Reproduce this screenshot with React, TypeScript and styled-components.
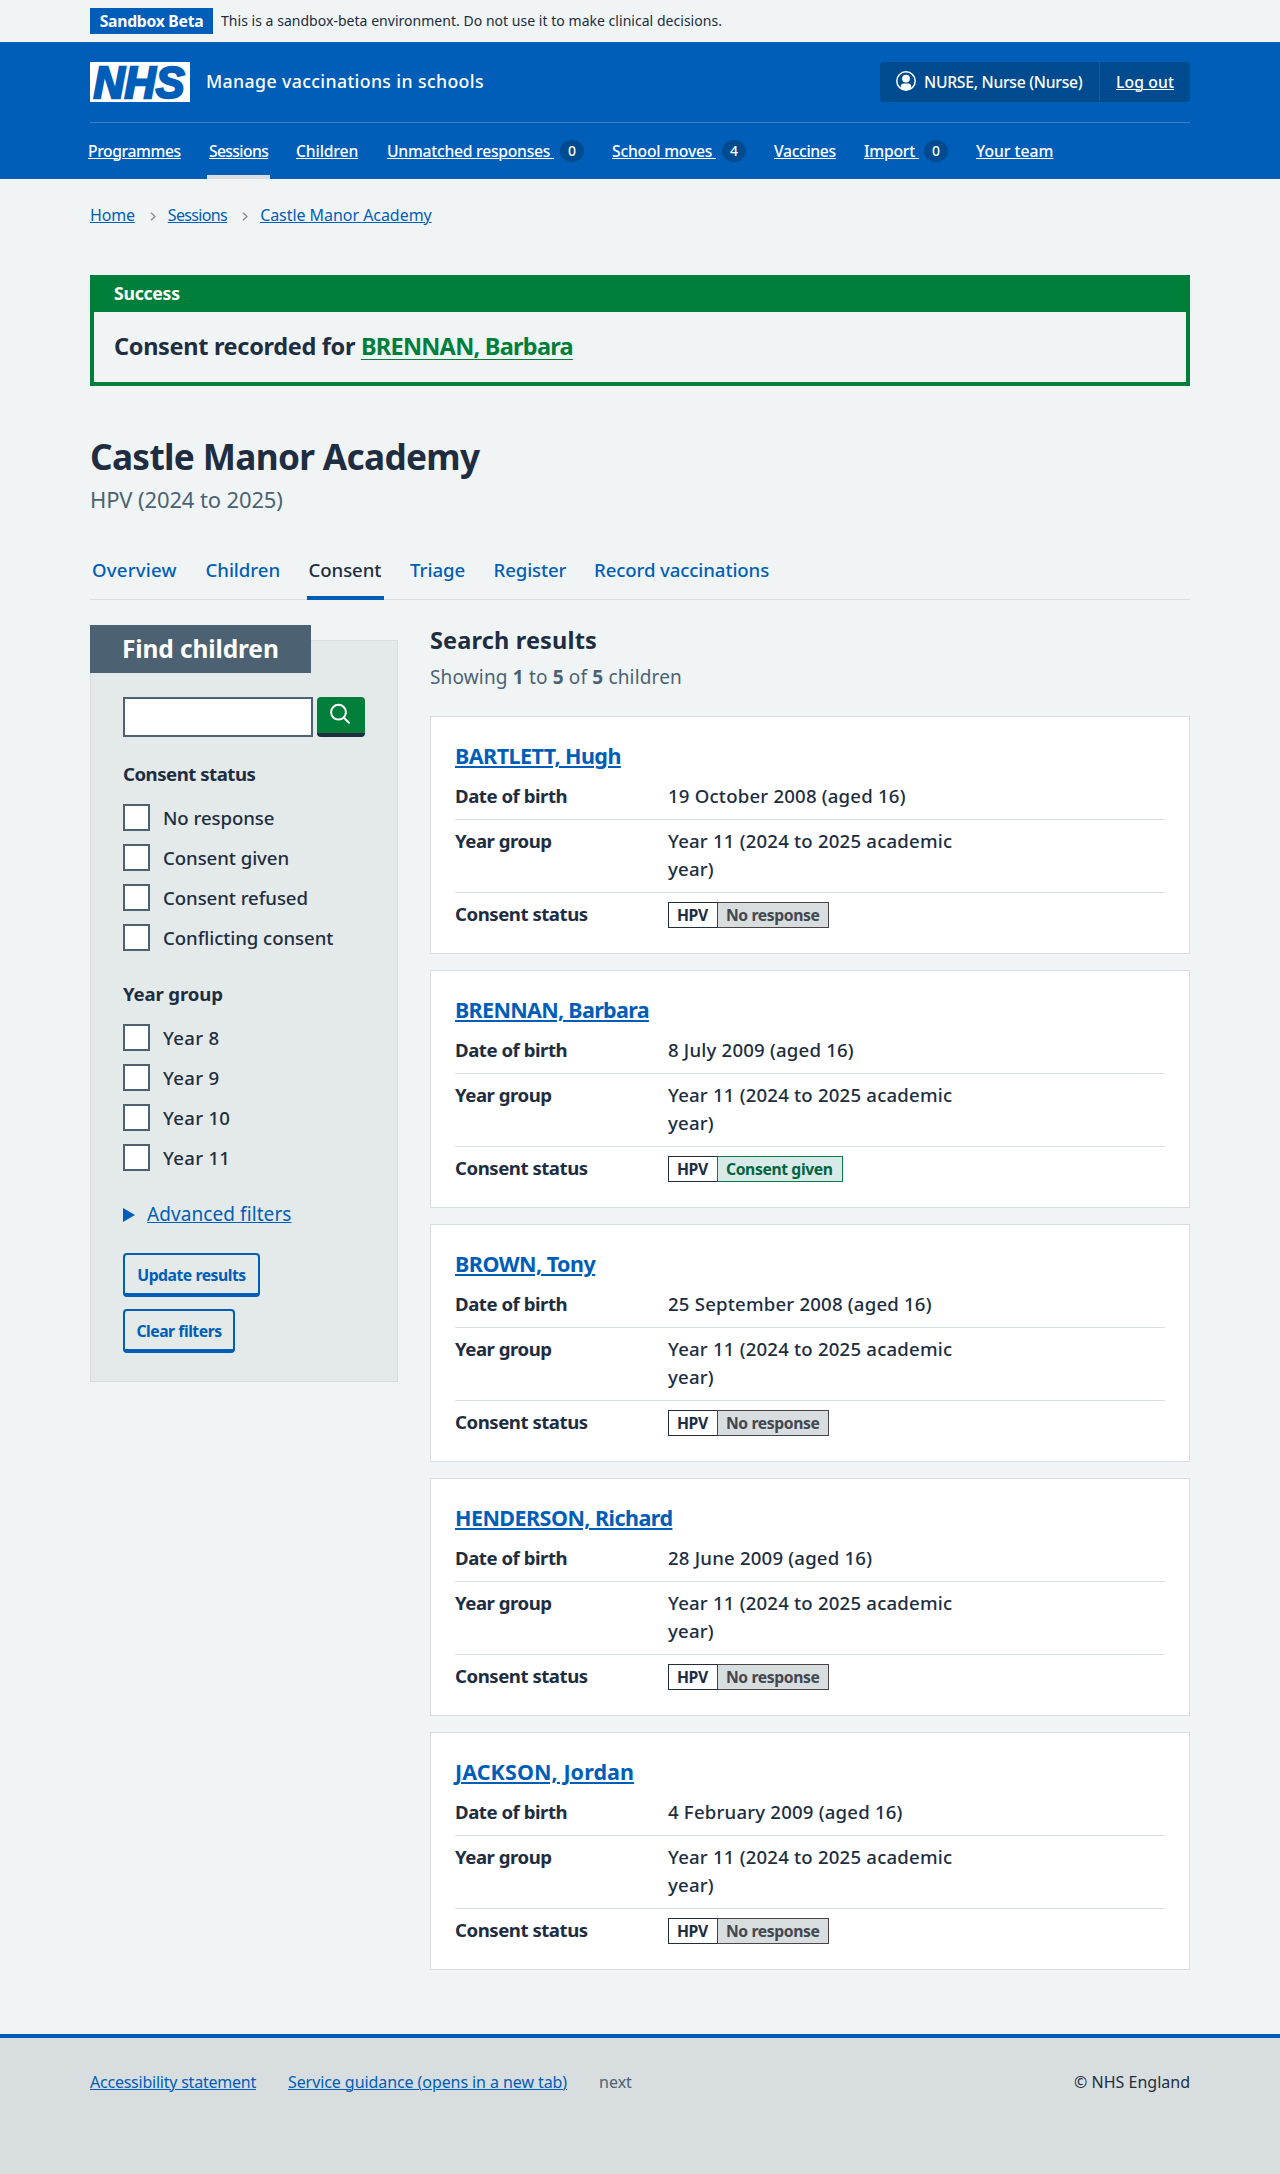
import React from "react";
import styled, { createGlobalStyle, css } from "styled-components";

const c = {
  blue: "#005eb8",
  darkBlue: "#004b8f",
  text: "#202d41",
  slate: "#4c6272",
  page: "#f0f4f5",
  line: "#d8dde0",
  green: "#007f3b",
};

const GlobalStyle = createGlobalStyle`
  *, *::before, *::after { box-sizing: border-box; }
  body {
    margin: 0;
    background: ${c.page};
    color: ${c.text};
    font-family: "Noto Sans", "Open Sans", sans-serif;
    font-size: 18.6px;
    font-weight: 500;
    line-height: 28px;
  }
  h1, h2, h3, p, dl, dd, dt, ul, ol, fieldset, legend { margin: 0; padding: 0; border: 0; }
  ul, ol { list-style: none; }
`;

interface SpacingProps {
  $ls?: number;
}
const tracking = css<SpacingProps>`
  letter-spacing: ${(p) => p.$ls ?? 0}px;
`;
const underlined = css`
  text-decoration: underline;
  text-decoration-thickness: 1px;
  text-underline-offset: 1px;
`;

const Container = styled.div`
  width: 1100px;
  margin: 0 auto;
`;

const EnvironmentBar = styled(Container)`
  display: flex;
  align-items: center;
  height: 42px;
  font-size: 14px;
`;
const EnvironmentTag = styled.strong`
  width: 123px;
  height: 26px;
  margin-right: 8px;
  background: ${c.blue};
  color: #fff;
  font-size: 15.7px;
  font-weight: 700;
  line-height: 26px;
  text-align: center;
  letter-spacing: -0.25px;
  white-space: nowrap;
`;
const EnvironmentText = styled.span`
  font-weight: 400;
  letter-spacing: 0.03px;
`;

const Header = styled.header`
  background: ${c.blue};
  color: #fff;
  height: 137px;
`;
const HeaderTop = styled.div`
  display: flex;
  align-items: center;
  padding: 20px 0;
  border-bottom: 1px solid rgba(255, 255, 255, 0.22);
`;
const Logo = styled.svg`
  display: block;
  width: 100px;
  height: 40px;
  overflow: visible;
`;
const ServiceName = styled.span`
  flex: 1;
  margin: -2px 0 0 16px;
  font-size: 17.7px;
  letter-spacing: 0.38px;
`;
const Account = styled.div`
  display: flex;
  height: 40px;
  border-radius: 4px;
  background: ${c.darkBlue};
  font-size: 15.7px;
  line-height: 40px;
  white-space: nowrap;
`;
const AccountName = styled.div`
  display: flex;
  width: 220px;
  padding-left: 16px;
  border-right: 1px solid ${c.blue};
  letter-spacing: -0.27px;
  svg {
    width: 20px;
    height: 20px;
    margin: 9px 8px 0 0;
  }
`;
const LogOut = styled.a`
  width: 90px;
  padding-left: 16px;
  letter-spacing: 0.12px;
  ${underlined}
`;

const NavList = styled.ul`
  display: flex;
  gap: 24px;
  margin-left: -4px;
  height: 56px;
  font-size: 15.7px;
  line-height: 24px;
`;
const NavItem = styled.li<{ $active?: boolean }>`
  display: flex;
  align-items: center;
  padding: ${(p) => (p.$active ? "4px 2px 0" : "0 2px")};
  border-bottom: ${(p) => (p.$active ? `4px solid ${c.line}` : "0")};
`;
const NavLink = styled.a<{ $w: number; $ls: number }>`
  width: ${(p) => p.$w}px;
  white-space: pre;
  ${tracking}
  ${underlined}
`;
const Count = styled.span`
  width: 24px;
  height: 22px;
  margin-left: 6px;
  border-radius: 50%;
  background: ${c.darkBlue};
  font-size: 14px;
  line-height: 22px;
  text-align: center;
`;

const Breadcrumb = styled.ol`
  display: flex;
  align-items: center;
  margin-top: 24px;
  font-size: 16px;
  font-weight: 400;
  line-height: 24px;
  svg {
    display: block;
    width: 6px;
    height: 9px;
    margin: 2px 12px 0 15px;
  }
`;
const Crumb = styled.li`
  display: flex;
  align-items: center;
`;
const Link = styled.a<SpacingProps>`
  color: ${c.blue};
  white-space: nowrap;
  ${tracking}
  ${underlined}
`;

const SuccessBanner = styled.section`
  margin-top: 48px;
  border: 4px solid ${c.green};
  border-top: 0;
`;
const BannerTitle = styled.h2`
  height: 37px;
  padding-left: 20px;
  background: ${c.green};
  color: #fff;
  font-size: 17.7px;
  font-weight: 700;
  line-height: 36px;
  letter-spacing: -0.3px;
`;
const BannerBody = styled.p`
  height: 70px;
  padding: 18px 20px 0;
  font-size: 23.5px;
  font-weight: 700;
  line-height: 32px;
  letter-spacing: -0.32px;
  a {
    color: ${c.green};
    letter-spacing: -0.74px;
    text-decoration: underline 1px;
    text-underline-offset: 4px;
    text-decoration-skip-ink: none;
  }
`;

const Title = styled.h1`
  margin-top: 48px;
  font-size: 35.2px;
  font-weight: 700;
  line-height: 44px;
  letter-spacing: -0.65px;
`;
const Caption = styled.p`
  margin-top: 5px;
  color: ${c.slate};
  font-size: 22px;
  font-weight: 400;
  line-height: 32px;
  letter-spacing: -0.13px;
`;

const Tabs = styled.ul`
  display: flex;
  gap: 24.5px;
  margin-top: 41px;
  border-bottom: 1px solid ${c.line};
`;
const Tab = styled.li<{ $active?: boolean; $w: number; $ls: number }>`
  width: ${(p) => p.$w + 4}px;
  height: 44px;
  margin-bottom: -1px;
  padding: 0 2px;
  border-bottom: 4px solid ${(p) => (p.$active ? c.blue : "transparent")};
  color: ${(p) => (p.$active ? c.text : c.blue)};
  line-height: 27px;
  white-space: nowrap;
  ${tracking}
`;

const Columns = styled.div`
  display: grid;
  grid-template-columns: 308px 760px;
  column-gap: 32px;
  align-items: start;
`;
const Filters = styled.form`
  margin-top: 40px;
  padding: 0 32px 28px;
  border: 1px solid ${c.line};
  background: #e4e9e9;
`;
const FiltersTitle = styled.h2`
  width: 221px;
  height: 48px;
  margin: -16px 0 24px -33px;
  padding-left: 32px;
  background: ${c.slate};
  color: #fff;
  font-size: 24.5px;
  font-weight: 700;
  line-height: 48px;
  letter-spacing: -0.12px;
`;
const SearchRow = styled.div`
  display: flex;
  gap: 4px;
`;
const SearchInput = styled.input`
  width: 190px;
  height: 40px;
  border: 2px solid ${c.slate};
  border-radius: 0;
  background: #fff;
`;
const SearchButton = styled.button`
  width: 48px;
  height: 40px;
  padding: 0;
  border: 0;
  border-bottom: 4px solid ${c.text};
  border-radius: 4px;
  background: ${c.green};
  svg {
    display: block;
    width: 22px;
    height: 22px;
    margin: -2px 0 0 12px;
  }
`;
const Group = styled.fieldset`
  margin-top: 23px;
`;
const Legend = styled.legend`
  margin-bottom: 9px;
  font-weight: 700;
  ${tracking}
`;
const CheckRow = styled.label<SpacingProps>`
  display: flex;
  align-items: center;
  gap: 13px;
  height: 40px;
  ${tracking}
`;
const CheckText = styled.span`
  padding-top: 2px;
`;
const Checkbox = styled.input`
  appearance: none;
  width: 27px;
  height: 27px;
  margin: 0;
  border: 2px solid ${c.slate};
  background: #fff;
`;
const Advanced = styled.div`
  display: flex;
  align-items: center;
  gap: 12px;
  margin: 23px 0 25px;
  font-size: 19px;
  font-weight: 400;
`;
const Triangle = styled.span`
  border-left: 12px solid ${c.blue};
  border-top: 7px solid transparent;
  border-bottom: 7px solid transparent;
  margin-top: 2px;
`;
const Actions = styled.div`
  display: flex;
  flex-direction: column;
  align-items: flex-start;
  gap: 12px;
`;
const OutlineButton = styled.button<{ $w: number }>`
  width: ${(p) => p.$w}px;
  height: 44px;
  padding: 1px 0 0;
  border: 2px solid ${c.blue};
  border-bottom-width: 4px;
  border-radius: 4px;
  background: transparent;
  color: ${c.blue};
  font-family: inherit;
  font-size: 15.7px;
  font-weight: 700;
  letter-spacing: -0.45px;
`;

const Results = styled.section`
  padding-top: 24px;
`;
const ResultsTitle = styled.h2`
  font-size: 23.5px;
  font-weight: 700;
  line-height: 32px;
  letter-spacing: 0.16px;
`;
const ResultsCount = styled.p`
  margin: 7px 0 25px;
  color: ${c.slate};
  font-size: 19px;
  font-weight: 400;
  letter-spacing: 0.16px;
  b {
    font-weight: 700;
  }
`;
const CardList = styled.div`
  display: flex;
  flex-direction: column;
  gap: 16px;
`;
const Card = styled.article`
  height: 238px;
  padding: 24px;
  border: 1px solid ${c.line};
  background: #fff;
`;
const CardName = styled.h3<{ $ls: number }>`
  margin-bottom: 5px;
  font-size: 21.5px;
  font-weight: 700;
  line-height: 29px;
  a {
    color: ${c.blue};
    letter-spacing: ${(p) => p.$ls}px;
    text-decoration: underline 2px;
    text-underline-offset: 2px;
  }
`;
const Row = styled.div`
  display: grid;
  grid-template-columns: 213px 300px;
  padding: 7px 0 9px;
  border-bottom: 1px solid ${c.line};
  &:last-child {
    padding-bottom: 0;
    border-bottom: 0;
  }
`;
const Term = styled.dt`
  font-weight: 700;
  letter-spacing: -0.46px;
`;
const Detail = styled.dd`
  letter-spacing: 0.2px;
`;
const StatusTag = styled.dd`
  display: flex;
  margin-top: 2px;
  font-size: 15.7px;
  font-weight: 700;
  line-height: 24px;
  white-space: nowrap;
`;
const Programme = styled.span`
  width: 49px;
  padding-left: 8px;
  border: 1px solid ${c.text};
  border-right: 0;
  letter-spacing: -0.4px;
`;
const Status = styled.span<{ $given: boolean }>`
  width: ${(p) => (p.$given ? 126 : 112)}px;
  padding-left: 8px;
  border: 1px solid ${(p) => (p.$given ? "#007f4a" : "#4a4247")};
  background: ${(p) => (p.$given ? "#d9e9e8" : c.line)};
  color: ${(p) => (p.$given ? "#00663f" : "#44474e")};
  letter-spacing: -0.38px;
`;

const Footer = styled.footer`
  height: 140px;
  margin-top: 64px;
  border-top: 4px solid ${c.blue};
  background: ${c.line};
`;
const FooterRow = styled(Container)`
  display: flex;
  gap: 32px;
  padding-top: 32px;
  font-size: 16px;
  font-weight: 400;
  line-height: 24px;
  white-space: nowrap;
`;
const FooterNote = styled.span`
  color: ${c.slate};
`;
const Copyright = styled.span`
  margin-left: auto;
`;

const Chevron = () => (
  <svg viewBox="0 0 6 9" fill="none" stroke="#84919b" strokeWidth="1.5">
    <path d="M1 .7 5 4.5 1 8.3" />
  </svg>
);

interface NavEntry {
  label: string;
  w: number;
  ls: number;
  active?: boolean;
  count?: number;
}
const nav: NavEntry[] = [
  { label: "Programmes", w: 93, ls: -0.41 },
  { label: "Sessions", w: 59, ls: -0.63, active: true },
  { label: "Children", w: 63, ls: -0.13 },
  { label: "Unmatched responses ", w: 167, ls: -0.25, count: 0 },
  { label: "School moves ", w: 104, ls: -0.21, count: 4 },
  { label: "Vaccines", w: 62, ls: -0.33 },
  { label: "Import ", w: 54, ls: -0.23, count: 0 },
  { label: "Your team", w: 77, ls: 0 },
];
const tabs = [
  { label: "Overview", w: 85, ls: 0.21 },
  { label: "Children", w: 74.5, ls: -0.04 },
  { label: "Consent", w: 73, ls: -0.06, active: true },
  { label: "Triage", w: 55, ls: 0 },
  { label: "Register", w: 72, ls: -0.1 },
  { label: "Record vaccinations", w: 175, ls: -0.1 },
];
const groups = [
  {
    legend: "Consent status",
    legendLs: -0.48,
    ls: -0.06,
    items: ["No response", "Consent given", "Consent refused", "Conflicting consent"],
  },
  { legend: "Year group", legendLs: -0.15, ls: 0.3, items: ["Year 8", "Year 9", "Year 10", "Year 11"] },
];
const children = [
  { name: "BARTLETT, Hugh", ls: -0.54, dob: "19 October 2008 (aged 16)", given: false },
  { name: "BRENNAN, Barbara", ls: -0.68, dob: "8 July 2009 (aged 16)", given: true },
  { name: "BROWN, Tony", ls: -0.5, dob: "25 September 2008 (aged 16)", given: false },
  { name: "HENDERSON, Richard", ls: -0.54, dob: "28 June 2009 (aged 16)", given: false },
  { name: "JACKSON, Jordan", ls: 0.08, dob: "4 February 2009 (aged 16)", given: false },
];

export default function App() {
  return (
    <>
      <GlobalStyle />
      <EnvironmentBar>
        <EnvironmentTag>Sandbox Beta</EnvironmentTag>
        <EnvironmentText>This is a sandbox-beta environment. Do not use it to make clinical decisions.</EnvironmentText>
      </EnvironmentBar>
      <Header>
        <Container>
          <HeaderTop>
            <Logo viewBox="0 0 100 40" role="img" aria-label="NHS">
              <rect width="100" height="40" fill="#fff" />
              <text
                x="3.5"
                y="36"
                textLength="91"
                lengthAdjust="spacingAndGlyphs"
                fill={c.blue}
                stroke={c.blue}
                strokeWidth="2.4"
                fontFamily="Liberation Sans, sans-serif"
                fontSize="44"
                fontWeight="700"
                fontStyle="italic"
              >
                NHS
              </text>
            </Logo>
            <ServiceName>Manage vaccinations in schools</ServiceName>
            <Account>
              <AccountName>
                <svg viewBox="0 0 20 20">
                  <circle cx="10" cy="10" r="9.2" fill="none" stroke="#fff" strokeWidth="1.5" />
                  <circle cx="10" cy="7.6" r="3.9" fill="#fff" />
                  <path d="M4.8 17.2v-1.6c0-2 1.2-3.2 3-3.2h4.4c1.8 0 3 1.2 3 3.2v1.6A9 9 0 0 1 10 19a9 9 0 0 1-5.2-1.8Z" fill="#fff" />
                </svg>
                NURSE, Nurse (Nurse)
              </AccountName>
              <LogOut>Log out</LogOut>
            </Account>
          </HeaderTop>
          <NavList>
            {nav.map((n) => (
              <NavItem key={n.label} $active={n.active}>
                <NavLink $w={n.w} $ls={n.ls}>{n.label}</NavLink>
                {n.count !== undefined && <Count>{n.count}</Count>}
              </NavItem>
            ))}
          </NavList>
        </Container>
      </Header>
      <Container as="main">
        <Breadcrumb>
          <Crumb><Link $ls={-0.2}>Home</Link><Chevron /></Crumb>
          <Crumb><Link $ls={-0.64}>Sessions</Link><Chevron /></Crumb>
          <Crumb><Link $ls={-0.05}>Castle Manor Academy</Link></Crumb>
        </Breadcrumb>
        <SuccessBanner>
          <BannerTitle>Success</BannerTitle>
          <BannerBody>Consent recorded for <a>BRENNAN, Barbara</a></BannerBody>
        </SuccessBanner>
        <Title>Castle Manor Academy</Title>
        <Caption>HPV (2024 to 2025)</Caption>
        <Tabs>
          {tabs.map((t) => (
            <Tab key={t.label} $w={t.w} $ls={t.ls} $active={t.active}>{t.label}</Tab>
          ))}
        </Tabs>
        <Columns>
          <Filters>
            <FiltersTitle>Find children</FiltersTitle>
            <SearchRow>
              <SearchInput aria-label="Search" />
              <SearchButton type="button" aria-label="Search">
                <svg viewBox="0 0 22 22" fill="none" stroke="#fff" strokeWidth="2" strokeLinecap="round">
                  <circle cx="9.5" cy="9.2" r="7.4" />
                  <path d="m15 14.8 5 5" />
                </svg>
              </SearchButton>
            </SearchRow>
            {groups.map((g) => (
              <Group key={g.legend}>
                <Legend $ls={g.legendLs}>{g.legend}</Legend>
                {g.items.map((item) => (
                  <CheckRow key={item} $ls={g.ls}>
                    <Checkbox type="checkbox" />
                    <CheckText>{item}</CheckText>
                  </CheckRow>
                ))}
              </Group>
            ))}
            <Advanced>
              <Triangle />
              <Link $ls={0.08}>Advanced filters</Link>
            </Advanced>
            <Actions>
              <OutlineButton type="button" $w={137}>Update results</OutlineButton>
              <OutlineButton type="button" $w={112}>Clear filters</OutlineButton>
            </Actions>
          </Filters>
          <Results>
            <ResultsTitle>Search results</ResultsTitle>
            <ResultsCount>Showing <b>1</b> to <b>5</b> of <b>5</b> children</ResultsCount>
            <CardList>
              {children.map((child) => (
                <Card key={child.name}>
                  <CardName $ls={child.ls}><a>{child.name}</a></CardName>
                  <dl>
                    <Row><Term>Date of birth</Term><Detail>{child.dob}</Detail></Row>
                    <Row><Term>Year group</Term><Detail>Year 11 (2024 to 2025 academic year)</Detail></Row>
                    <Row>
                      <Term>Consent status</Term>
                      <StatusTag>
                        <Programme>HPV</Programme>
                        <Status $given={child.given}>{child.given ? "Consent given" : "No response"}</Status>
                      </StatusTag>
                    </Row>
                  </dl>
                </Card>
              ))}
            </CardList>
          </Results>
        </Columns>
      </Container>
      <Footer>
        <FooterRow>
          <Link $ls={-0.23}>Accessibility statement</Link>
          <Link $ls={-0.08}>Service guidance (opens in a new tab)</Link>
          <FooterNote>next</FooterNote>
          <Copyright>© NHS England</Copyright>
        </FooterRow>
      </Footer>
    </>
  );
}
